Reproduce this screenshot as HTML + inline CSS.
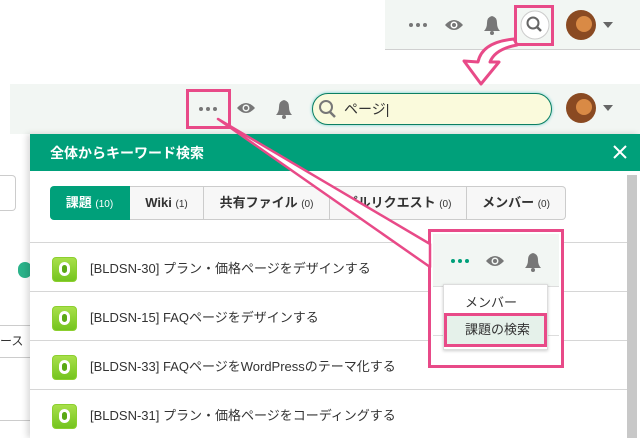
<!DOCTYPE html>
<html><head><meta charset="utf-8"><style>
*{margin:0;padding:0;box-sizing:border-box}
body{width:640px;height:438px;overflow:hidden;background:#fff;position:relative;font-family:"Liberation Sans","Noto Sans CJK JP",sans-serif;color:#333}
.abs{position:absolute}
.bar{background:#f2f6f3}
.tab{position:absolute;top:186px;height:34px;border:1px solid #ccc;border-left:none;background:#f7f7f7;font-size:13px;font-weight:bold;line-height:32px;text-align:center;color:#333}
.tab small{font-size:10px;font-weight:normal}
.row{position:absolute;left:30px;width:597px;height:49px;border-top:1px solid #d6d6d6}
.row .ic{position:absolute;left:22px;top:14px;width:25px;height:25px;border-radius:4px;background:linear-gradient(#a8e04a,#74c41e);border:1px solid #8ccf2f}
.row .ic:after{content:"";position:absolute;left:6px;top:4px;width:11px;height:14px;border-radius:6px;background:#5aa915;box-shadow:inset 0 0 0 3px #fff}
.row span{position:absolute;left:60px;top:15px;font-size:13px;color:#333}
</style></head><body>
<div class="abs bar" style="left:385px;top:0;width:255px;height:50px;border-bottom:1px solid #d0d0d0"></div>
<svg class="abs" style="left:0;top:0" width="640" height="438">
<g fill="#777"><circle cx="411" cy="25" r="2"/><circle cx="418" cy="25" r="2"/><circle cx="425" cy="25" r="2"/></g>
<path d="M445 25q9-10 18 0q-9 10-18 0z" fill="#777"/><circle cx="454" cy="25" r="3.5" fill="#fff"/><circle cx="454" cy="25" r="2" fill="#777"/>
<path d="M484 31q3-3 3-8q0-6 5-7q5 1 5 7q0 5 3 8z" fill="#777"/><circle cx="492" cy="33" r="2" fill="#777"/>
<circle cx="535" cy="25" r="14" fill="#fff" stroke="#ccc"/>
<circle cx="533" cy="23" r="5.5" fill="none" stroke="#666" stroke-width="2"/><line x1="537" y1="27" x2="541" y2="31" stroke="#666" stroke-width="2.5"/>
<rect x="515.5" y="6.5" width="37" height="38" fill="none" stroke="#e84a88" stroke-width="3"/>
<circle cx="581" cy="25" r="15" fill="#8a4a22"/><circle cx="584" cy="24" r="8" fill="#d98a45"/>
<path d="M603 22h10l-5 6z" fill="#666"/>
</svg>
<div class="abs bar" style="left:10px;top:84px;width:630px;height:50px"></div>
<div class="abs" style="left:312px;top:93px;width:240px;height:32px;border:1.5px solid #0b7f62;border-radius:16px;background:#fafadc;box-shadow:0 0 3px #6cc"></div>
<div class="abs" style="left:344px;top:99px;font-size:14px;color:#333">ページ<span style="font-weight:100">|</span></div>
<div class="abs" style="left:0;top:134px;width:30px;height:304px;background:#fff"></div>
<div class="abs" style="left:0;top:175px;width:16px;height:36px;border:1px solid #ccc;border-left:none;border-radius:0 4px 4px 0"></div>
<div class="abs" style="left:18px;top:262px;width:14px;height:16px;border-radius:8px;background:#2bb38a"></div>
<div class="abs" style="left:0;top:325px;width:30px;border-top:1px solid #ccc"></div>
<div class="abs" style="left:0;top:332px;font-size:12px">ース</div>
<div class="abs" style="left:0;top:357px;width:30px;border-top:1px solid #ccc"></div>
<div class="abs" style="left:0;top:420px;width:30px;border-top:1px solid #ccc"></div>
<div class="abs" style="left:30px;top:134px;width:610px;height:304px;background:#fff;box-shadow:-3px 0 6px rgba(0,0,0,.15)"></div>
<div class="abs" style="left:30px;top:134px;width:610px;height:37px;background:#00a07a"></div>
<div class="abs" style="left:50px;top:143px;color:#fff;font-size:14px;font-weight:bold">全体からキーワード検索</div>
<div class="abs" style="left:627px;top:175px;width:10px;height:263px;background:#c8c8c8"></div>
<div class="tab" style="left:50px;width:80px;background:#00a07a;border-color:#00a07a;color:#fff;border-radius:4px 0 0 4px">課題 <small>(10)</small></div>
<div class="tab" style="left:130px;width:74px">Wiki <small>(1)</small></div>
<div class="tab" style="left:204px;width:126px">共有ファイル <small>(0)</small></div>
<div class="tab" style="left:330px;width:137px">プルリクエスト <small>(0)</small></div>
<div class="tab" style="left:467px;width:99px;border-radius:0 4px 4px 0">メンバー <small>(0)</small></div>
<div class="row" style="top:242px"><div class="ic"></div><span>[BLDSN-30] プラン・価格ページをデザインする</span></div>
<div class="row" style="top:291px"><div class="ic"></div><span>[BLDSN-15] FAQページをデザインする</span></div>
<div class="row" style="top:340px"><div class="ic"></div><span>[BLDSN-33] FAQページをWordPressのテーマ化する</span></div>
<div class="row" style="top:389px"><div class="ic"></div><span>[BLDSN-31] プラン・価格ページをコーディングする</span></div>
<div class="abs" style="left:428px;top:229px;width:136px;height:139px;border:3px solid #e84a88;background:#fff"></div>
<div class="abs bar" style="left:433px;top:234px;width:126px;height:52px"></div>
<div class="abs" style="left:433px;top:286px;width:126px;border-top:1px solid #ddd"></div>
<div class="abs" style="left:433px;top:335px;width:126px;border-top:1px solid #ddd"></div>
<div class="abs" style="left:443px;top:284px;width:105px;height:66px;background:#fff;border:1px solid #ddd;box-shadow:0 1px 3px rgba(0,0,0,.2)"></div>
<div class="abs" style="left:465px;top:292px;font-size:13px">メンバー</div>
<div class="abs" style="left:444px;top:313px;width:103px;height:34px;border:3px solid #e84a88;background:#e5f1ea;font-size:13px;line-height:28px;padding-left:18px">課題の検索</div>
<svg class="abs" style="left:0;top:0" width="640" height="438">
<g fill="#777"><circle cx="201" cy="109" r="2"/><circle cx="208" cy="109" r="2"/><circle cx="215" cy="109" r="2"/></g>
<rect x="187.5" y="90.5" width="42" height="37" fill="none" stroke="#e84a88" stroke-width="3"/>
<path d="M237 108q9-10 18 0q-9 10-18 0z" fill="#777"/><circle cx="246" cy="108" r="3.5" fill="#f2f6f3"/><circle cx="246" cy="108" r="2" fill="#777"/>
<path d="M276 115q3-3 3-8q0-6 5-7q5 1 5 7q0 5 3 8z" fill="#777"/><circle cx="284" cy="117" r="2" fill="#777"/>
<circle cx="326" cy="107" r="6" fill="none" stroke="#777" stroke-width="2"/><line x1="330" y1="112" x2="335" y2="117" stroke="#777" stroke-width="2.5"/>
<circle cx="581" cy="108" r="15" fill="#8a4a22"/><circle cx="584" cy="107" r="8" fill="#d98a45"/>
<path d="M603 105h10l-5 6z" fill="#666"/>
<path d="M614 146l12 12M626 146l-12 12" stroke="#fff" stroke-width="2"/>
<g fill="#00a07a"><circle cx="453" cy="261" r="2"/><circle cx="460" cy="261" r="2"/><circle cx="467" cy="261" r="2"/></g>
<path d="M486 261q9-10 18 0q-9 10-18 0z" fill="#777"/><circle cx="495" cy="261" r="3.5" fill="#f2f6f3"/><circle cx="495" cy="261" r="2" fill="#777"/>
<path d="M525 268q3-3 3-8q0-6 5-7q5 1 5 7q0 5 3 8z" fill="#777"/><circle cx="533" cy="270" r="2" fill="#777"/>
<path d="M218 119L430 244L430 267Z" fill="#fff" stroke="#e84a88" stroke-width="2.5" stroke-linejoin="round"/>
<path d="M514 39Q482 42 478 62L464 61L481 84L499 62L490 62Q495 49 517 45Z" fill="#fff" stroke="#e84a88" stroke-width="3" stroke-linejoin="round"/>
</svg>
</body></html>
